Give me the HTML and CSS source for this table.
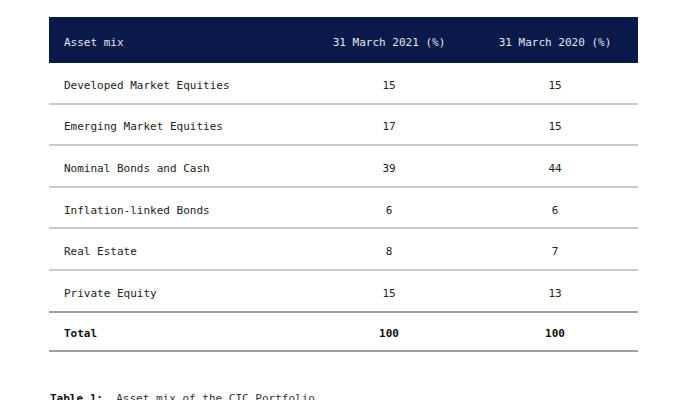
FILE: index.html
```html
<!DOCTYPE html>
<html lang="en">
<head>
<meta charset="utf-8">
<title>Asset mix</title>
<link rel="stylesheet" href="styles.css">
</head>
<body>
<div class="page">
  <div class="table">
    <div class="row head">
      <div class="cell label">Asset mix</div>
      <div class="cell num">31 March 2021 (%)</div>
      <div class="cell num">31 March 2020 (%)</div>
    </div>
    <div class="row">
      <div class="cell label">Developed Market Equities</div>
      <div class="cell num">15</div>
      <div class="cell num">15</div>
    </div>
    <div class="row">
      <div class="cell label">Emerging Market Equities</div>
      <div class="cell num">17</div>
      <div class="cell num">15</div>
    </div>
    <div class="row">
      <div class="cell label">Nominal Bonds and Cash</div>
      <div class="cell num">39</div>
      <div class="cell num">44</div>
    </div>
    <div class="row">
      <div class="cell label">Inflation-linked Bonds</div>
      <div class="cell num">6</div>
      <div class="cell num">6</div>
    </div>
    <div class="row">
      <div class="cell label">Real Estate</div>
      <div class="cell num">8</div>
      <div class="cell num">7</div>
    </div>
    <div class="row last">
      <div class="cell label">Private Equity</div>
      <div class="cell num">15</div>
      <div class="cell num">13</div>
    </div>
    <div class="row total">
      <div class="cell label">Total</div>
      <div class="cell num">100</div>
      <div class="cell num">100</div>
    </div>
  </div>
  <p class="caption"><b>Table 1:</b>&nbsp; Asset mix of the CIC Portfolio</p>
</div>
</body>
</html>
```
FILE: styles.css
```css
html, body {
  margin: 0;
  padding: 0;
  background: #ffffff;
}
body {
  font-family: "DejaVu Sans Mono", "Liberation Mono", monospace;
  font-size: 11px;
  color: #222222;
}
.page {
  padding: 17px 43px 0 49px;
}
.table {
  width: 589px;
  display: flex;
  flex-direction: column;
}
.row {
  display: grid;
  grid-template-columns: 257px 166px 166px;
  align-items: center;
  height: 41.6px;
  box-sizing: border-box;
  border-bottom: 2px solid #c9c9c9;
}
.row.head {
  height: 46px;
  background: #0b1a4b;
  color: #e4e6ee;
  border-bottom: none;
}
.row.last {
  border-bottom-color: #9e9e9e;
}
.row.total {
  height: 39px;
  font-weight: bold;
  color: #111111;
  border-bottom-color: #9e9e9e;
}
.cell {
  white-space: pre;
  padding-top: 5px;
}
.cell.label {
  padding-left: 15px;
}
.cell.num {
  text-align: center;
}
.caption {
  margin: 40px 0 0 1px;
  color: #333333;
  white-space: pre;
}
.caption b {
  color: #111111;
}
```
